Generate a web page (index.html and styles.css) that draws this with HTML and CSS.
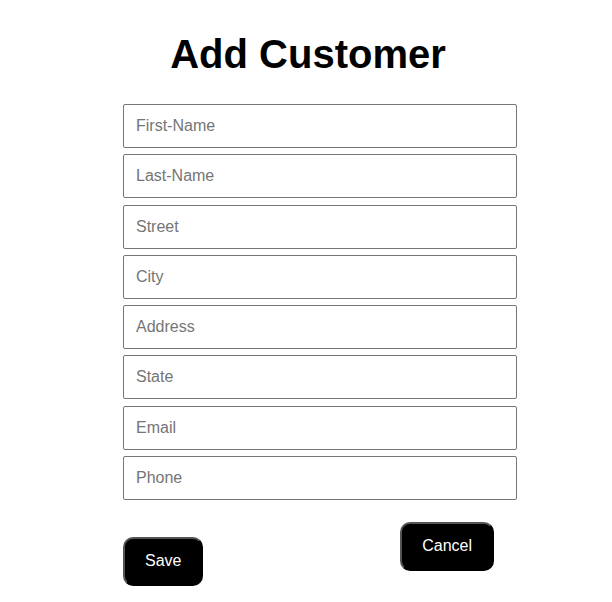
FILE: index.html
```html
<!DOCTYPE html>
<html lang="en">
<head>
<meta charset="utf-8">
<title>Add Customer</title>
<link rel="stylesheet" href="styles.css">
</head>
<body>
<main class="page">
  <h1 class="title">Add Customer</h1>
  <form class="form">
    <div class="fields">
      <input class="field" type="text" placeholder="First-Name">
      <input class="field" type="text" placeholder="Last-Name">
      <input class="field" type="text" placeholder="Street">
      <input class="field" type="text" placeholder="City">
      <input class="field" type="text" placeholder="Address">
      <input class="field" type="text" placeholder="State">
      <input class="field" type="text" placeholder="Email">
      <input class="field" type="text" placeholder="Phone">
    </div>
    <div class="actions">
      <button class="btn btn-save" type="button">Save</button>
      <button class="btn btn-cancel" type="button">Cancel</button>
    </div>
  </form>
</main>
</body>
</html>
```
FILE: styles.css
```css
html, body {
  margin: 0;
  padding: 0;
  background: #ffffff;
}

body {
  font-family: "Liberation Sans", Arial, sans-serif;
  color: #000;
}

.page {
  width: 612px;
  display: flex;
  flex-direction: column;
}

.title {
  margin: 31px 0 0 0;
  padding-left: 4px;
  font-size: 40px;
  line-height: 46px;
  font-weight: bold;
  text-align: center;
}

.form {
  margin: 27px 0 0 123px;
  width: 394px;
  display: flex;
  flex-direction: column;
}

.fields {
  display: flex;
  flex-direction: column;
  gap: 6.3px;
}

.field {
  box-sizing: border-box;
  width: 394px;
  height: 44px;
  margin: 0;
  padding: 0 12px;
  border: 1px solid #767676;
  border-radius: 2px;
  font-family: "Liberation Sans", Arial, sans-serif;
  font-size: 16px;
  color: #000;
  background: #fff;
  outline: none;
}

.field::placeholder {
  color: #757575;
  opacity: 1;
}

.actions {
  display: flex;
  justify-content: space-between;
  align-items: flex-start;
  margin-top: 22px;
  padding-right: 23px;
}

.btn {
  box-sizing: border-box;
  height: 49px;
  padding: 0 20px 2px 20px;
  border: 2px outset #555;
  border-radius: 10px;
  background: #000;
  color: #fff;
  font-family: "Liberation Sans", Arial, sans-serif;
  font-size: 16px;
  cursor: pointer;
}

.btn-save {
  margin-top: 15px;
}
```
